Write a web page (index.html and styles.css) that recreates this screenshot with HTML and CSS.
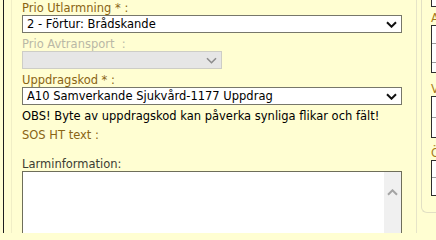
FILE: index.html
```html
<!DOCTYPE html>
<html lang="sv">
<head>
<meta charset="utf-8">
<title>Larm</title>
<link rel="stylesheet" href="styles.css">
</head>
<body>
<div class="page">
  <div class="rail"></div>
  <main class="form">
    <div class="field">
      <div class="lbl">Prio Utlarmning * :</div>
      <div class="select">
        <span class="value">2 - Förtur: Brådskande</span>
        <svg class="chev" width="11" height="7" viewBox="0 0 11 7"><path d="M1 1.2 L5.5 5.7 L10 1.2" fill="none" stroke="#111" stroke-width="2"/></svg>
      </div>
    </div>
    <div class="field">
      <div class="lbl lbl-disabled">Prio Avtransport&nbsp; :</div>
      <div class="select select-disabled">
        <span class="value"></span>
        <svg class="chev" width="11" height="7" viewBox="0 0 11 7"><path d="M1 1.2 L5.5 5.7 L10 1.2" fill="none" stroke="#8c8c8c" stroke-width="1.6"/></svg>
      </div>
    </div>
    <div class="field">
      <div class="lbl">Uppdragskod * :</div>
      <div class="select">
        <span class="value">A10 Samverkande Sjukvård-1177 Uppdrag</span>
        <svg class="chev" width="11" height="7" viewBox="0 0 11 7"><path d="M1 1.2 L5.5 5.7 L10 1.2" fill="none" stroke="#111" stroke-width="2"/></svg>
      </div>
    </div>
    <div class="note">OBS! Byte av uppdragskod kan påverka synliga flikar och fält!</div>
    <div class="lbl sos">SOS HT text :</div>
    <div class="lbl larm">Larminformation:</div>
    <div class="textarea">
      <div class="scroll">
        <svg width="11" height="7" viewBox="0 0 11 7"><path d="M1 5.8 L5.5 1.3 L10 5.8" fill="none" stroke="#a4a4a4" stroke-width="2"/></svg>
      </div>
    </div>
  </main>
  <aside class="side">
    <div class="box cut"></div>
    <div class="slbl">A</div>
    <div class="box">
      <div class="row r17"></div>
      <div class="row r18"></div>
      <div class="row last r9"></div>
    </div>
    <div class="slbl s2">V</div>
    <div class="box">
      <div class="row r20"></div>
      <div class="row last r19"></div>
    </div>
    <div class="slbl s3">Ö</div>
    <div class="box">
      <div class="row r16"></div>
      <div class="row last r17"></div>
    </div>
  </aside>
</div>
</body>
</html>
```
FILE: styles.css
```css
html, body {
  margin: 0;
  height: 233px;
  overflow: hidden;
}
body {
  background: #fffed2;
  font-family: "DejaVu Sans", Verdana, sans-serif;
  font-size: 11.5px;
  color: #000;
}
.page {
  display: flex;
  height: 233px;
}
.rail {
  flex: none;
  width: 3px;
  border-right: 1px solid #1e1e1e;
}
.form {
  flex: none;
  box-sizing: border-box;
  width: 406px;
  margin-left: 7px;
  padding-top: 1px;
  padding-left: 10px;
  border-left: 1px solid #f0eec6;
  border-right: 1px solid #e6e4c8;
}
.field + .field {
  margin-top: 4px;
}
.lbl {
  line-height: 14px;
  color: #8a6414;
  white-space: nowrap;
}
.lbl-disabled {
  color: #b9b8a6;
}
.select {
  box-sizing: border-box;
  width: 380px;
  height: 18px;
  display: flex;
  align-items: center;
  justify-content: space-between;
  padding: 0 4px 0 4px;
  background: #fff;
  border: 1px solid #77776a;
}
.select-disabled {
  width: 200px;
  background: #e6e6e6;
  border-color: #cdcdc6;
}
.value {
  line-height: 16px;
  white-space: nowrap;
}
.chev {
  flex: none;
}
.note {
  margin-top: 4px;
  line-height: 14px;
  white-space: nowrap;
}
.sos {
  margin-top: 5px;
}
.larm {
  margin-top: 15px;
  color: #3c3c32;
}
.textarea {
  box-sizing: border-box;
  width: 380px;
  height: 80px;
  display: flex;
  justify-content: flex-end;
  background: #fff;
  border: 1px solid #6e6e5a;
}
.scroll {
  width: 17px;
  background: #f0f0f0;
  display: flex;
  flex-direction: column;
  align-items: center;
  padding-top: 17px;
}
.side {
  flex: none;
  box-sizing: border-box;
  width: 40px;
  height: 213px;
  margin-left: 4px;
  padding-left: 9px;
  border-left: 1px solid #e2e0c4;
  border-bottom: 1px solid #e2e0c4;
  border-bottom-left-radius: 6px;
}
.box {
  background: #fff;
  border: 1px solid #2e2e2e;
  border-right: none;
}
.cut {
  border-top: none;
  height: 6px;
}
.slbl {
  line-height: 13px;
  margin-top: 5px;
  color: #a87a1c;
}
.s2 { margin-top: 10px; }
.s3 { margin-top: 9px; }
.row {
  border-bottom: 1px solid #9c9c9c;
}
.row.last {
  border-bottom: none;
}
.r9 { height: 9px; }
.r16 { height: 16px; }
.r17 { height: 17px; }
.r18 { height: 18px; }
.r19 { height: 19px; }
.r20 { height: 20px; }
```
